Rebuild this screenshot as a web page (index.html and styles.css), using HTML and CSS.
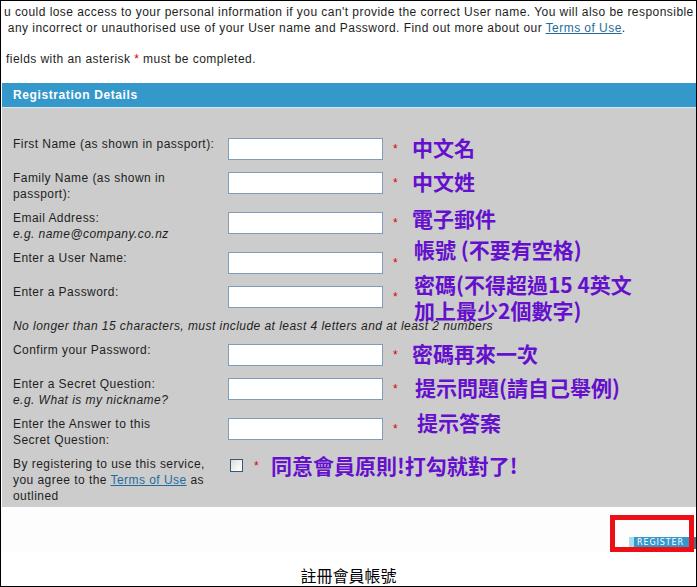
FILE: index.html
```html
<!DOCTYPE html>
<html lang="en">
<head>
<meta charset="utf-8">
<title>Registration Details</title>
<link rel="stylesheet" href="styles.css">
</head>
<body>
<div class="page">
  <div class="intro">
    <p class="lead">u could lose access to your personal information if you can't provide the correct User name. You will also be responsible<br>&nbsp;any incorrect or unauthorised use of your User name and Password. Find out more about our <a href="#">Terms of Use</a>.</p>
    <p class="note">fields with an asterisk <span class="req">*</span> must be completed.</p>
  </div>

  <section class="panel">
    <h2 class="panel-title">Registration Details</h2>
    <div class="form">
      <div class="row">
        <div class="label">First Name (as shown in passport):</div>
        <div class="field"><input class="box" type="text"><span class="req">*</span><span class="zh">中文名</span></div>
      </div>
      <div class="row">
        <div class="label">Family Name (as shown in<br>passport):</div>
        <div class="field"><input class="box" type="text"><span class="req">*</span><span class="zh">中文姓</span></div>
      </div>
      <div class="row">
        <div class="label">Email Address:<br><i>e.g. name@company.co.nz</i></div>
        <div class="field"><input class="box" type="text"><span class="req">*</span><span class="zh zh-up3">電子郵件</span></div>
      </div>
      <div class="row">
        <div class="label">Enter a User Name:</div>
        <div class="field"><input class="box" type="text"><span class="req">*</span><span class="zh zh-up12 zh-right2">帳號 (不要有空格)</span></div>
      </div>
      <div class="row">
        <div class="label">Enter a Password:</div>
        <div class="field"><input class="box" type="password"><span class="req">*</span><span class="zh zh-down2 zh-right2">密碼(不得超過15 4英文<br>加上最少2個數字)</span></div>
      </div>
      <div class="row row-note">
        <div class="hint">No longer than 15 characters, must include at least 4 letters and at least 2 numbers</div>
      </div>
      <div class="row">
        <div class="label">Confirm your Password:</div>
        <div class="field"><input class="box" type="password"><span class="req">*</span><span class="zh">密碼再來一次</span></div>
      </div>
      <div class="row">
        <div class="label">Enter a Secret Question:<br><i>e.g. What is my nickname?</i></div>
        <div class="field"><input class="box" type="text"><span class="req">*</span><span class="zh zh-right3">提示問題(請自己舉例)</span></div>
      </div>
      <div class="row">
        <div class="label">Enter the Answer to this<br>Secret Question:</div>
        <div class="field"><input class="box" type="text"><span class="req">*</span><span class="zh zh-up5 zh-right5">提示答案</span></div>
      </div>
      <div class="row row-last">
        <div class="label">By registering to use this service,<br>you agree to the <a href="#">Terms of Use</a> as<br>outlined</div>
        <div class="field field-check"><input class="check" type="checkbox"><span class="req req-check">*</span><span class="zh zh-check">同意會員原則!打勾就對了!</span></div>
      </div>
    </div>
  </section>

  <div class="actions">
    <button class="register" type="button">REGISTER</button>
    <span class="highlight"></span>
  </div>

  <p class="caption">註冊會員帳號</p>
</div>
</body>
</html>
```

FILE: styles.css
```css
* {
  box-sizing: border-box;
}

html, body {
  margin: 0;
  padding: 0;
  background: #ffffff;
}

body {
  font-family: "Liberation Sans", Arial, "Noto Sans CJK TC", sans-serif;
  font-size: 12px;
  line-height: 16px;
  letter-spacing: 0.45px;
  color: #1e1e1e;
}

.page {
  width: 697px;
  height: 587px;
  border: 1px solid #000000;
  overflow: hidden;
}

a {
  color: #1f6d9c;
  text-decoration: underline;
}

.intro {
  padding: 3px 0 0 3px;
  margin-bottom: 16px;
}

.lead {
  margin: 0;
  white-space: nowrap;
}

.note {
  margin: 15px 0 0 0;
  padding-left: 2px;
}

.req {
  color: #dd0000;
}

.panel {
  margin: 0 0 0 1px;
}

.panel-title {
  margin: 0;
  height: 25px;
  line-height: 24px;
  padding-left: 11px;
  font-size: 12px;
  font-weight: bold;
  letter-spacing: 0.6px;
  color: #ffffff;
  background: #3598cb;
  border-bottom: 1px solid #d4eaf2;
}

.form {
  background: #cccccc;
  padding: 24px 0 0 0;
}

.row {
  display: flex;
  align-items: flex-start;
  padding: 4px 0 4px 11px;
}

.row-last {
  padding-bottom: 3px;
}

.label {
  width: 215px;
  flex: none;
}

.hint {
  font-style: italic;
  white-space: nowrap;
}

.field {
  display: flex;
  align-items: center;
  height: 26px;
}

.box {
  width: 155px;
  height: 22px;
  margin: 0;
  padding: 0 3px;
  border: 1px solid #7f9db9;
  background: #ffffff;
  font: inherit;
}

.field .req {
  margin-left: 10px;
  width: 5px;
}

.zh {
  margin-left: 14px;
  margin-bottom: 5px;
  font-family: "Noto Sans CJK TC", "Noto Sans CJK SC", sans-serif;
  font-size: 21px;
  line-height: 26px;
  font-weight: bold;
  letter-spacing: 0;
  color: #6410cc;
  white-space: nowrap;
}

.zh-up3 { margin-bottom: 11px; }
.zh-up5 { margin-bottom: 15px; }
.zh-up12 { margin-bottom: 29px; }
.zh-down2 { margin-bottom: 0; margin-top: 0; }
.zh-right2 { margin-left: 16px; }
.zh-right3 { margin-left: 17px; }
.zh-right5 { margin-left: 19px; }

.field-check {
  height: 19px;
}

.check {
  appearance: none;
  -webkit-appearance: none;
  width: 13px;
  height: 13px;
  margin: 0 0 0 2px;
  border: 1px solid #3a5777;
  background: linear-gradient(135deg, #dcdcd6 0%, #f4f4f0 60%, #ffffff 100%);
}

.field .req-check {
  margin-left: 11px;
}

.zh-check {
  margin-left: 12px;
  margin-top: 0;
  margin-bottom: 1px;
}

.actions {
  position: relative;
  height: 45px;
  display: flex;
  justify-content: flex-end;
  align-items: flex-end;
  padding-bottom: 3px;
  background: #fdfdfd;
}

.register {
  width: 67px;
  height: 12px;
  margin: 0;
  padding: 0 0 0 3px;
  border: none;
  border-left: 5px solid #a9dbf1;
  border-right: 2px solid #5c6e80;
  background: #3598cb;
  color: #ffffff;
  font-family: "DejaVu Sans", Verdana, sans-serif;
  font-size: 8px;
  line-height: 12px;
  letter-spacing: 0.9px;
  text-align: left;
}

.highlight {
  position: absolute;
  top: 8px;
  right: 2px;
  width: 84px;
  height: 37px;
  border: 5px solid #ec0f16;
}

.caption {
  margin: 14px 0 0 0;
  text-align: center;
  font-family: "Noto Sans CJK TC", sans-serif;
  font-size: 16px;
  line-height: 18px;
  letter-spacing: 0;
  color: #000000;
}
```
